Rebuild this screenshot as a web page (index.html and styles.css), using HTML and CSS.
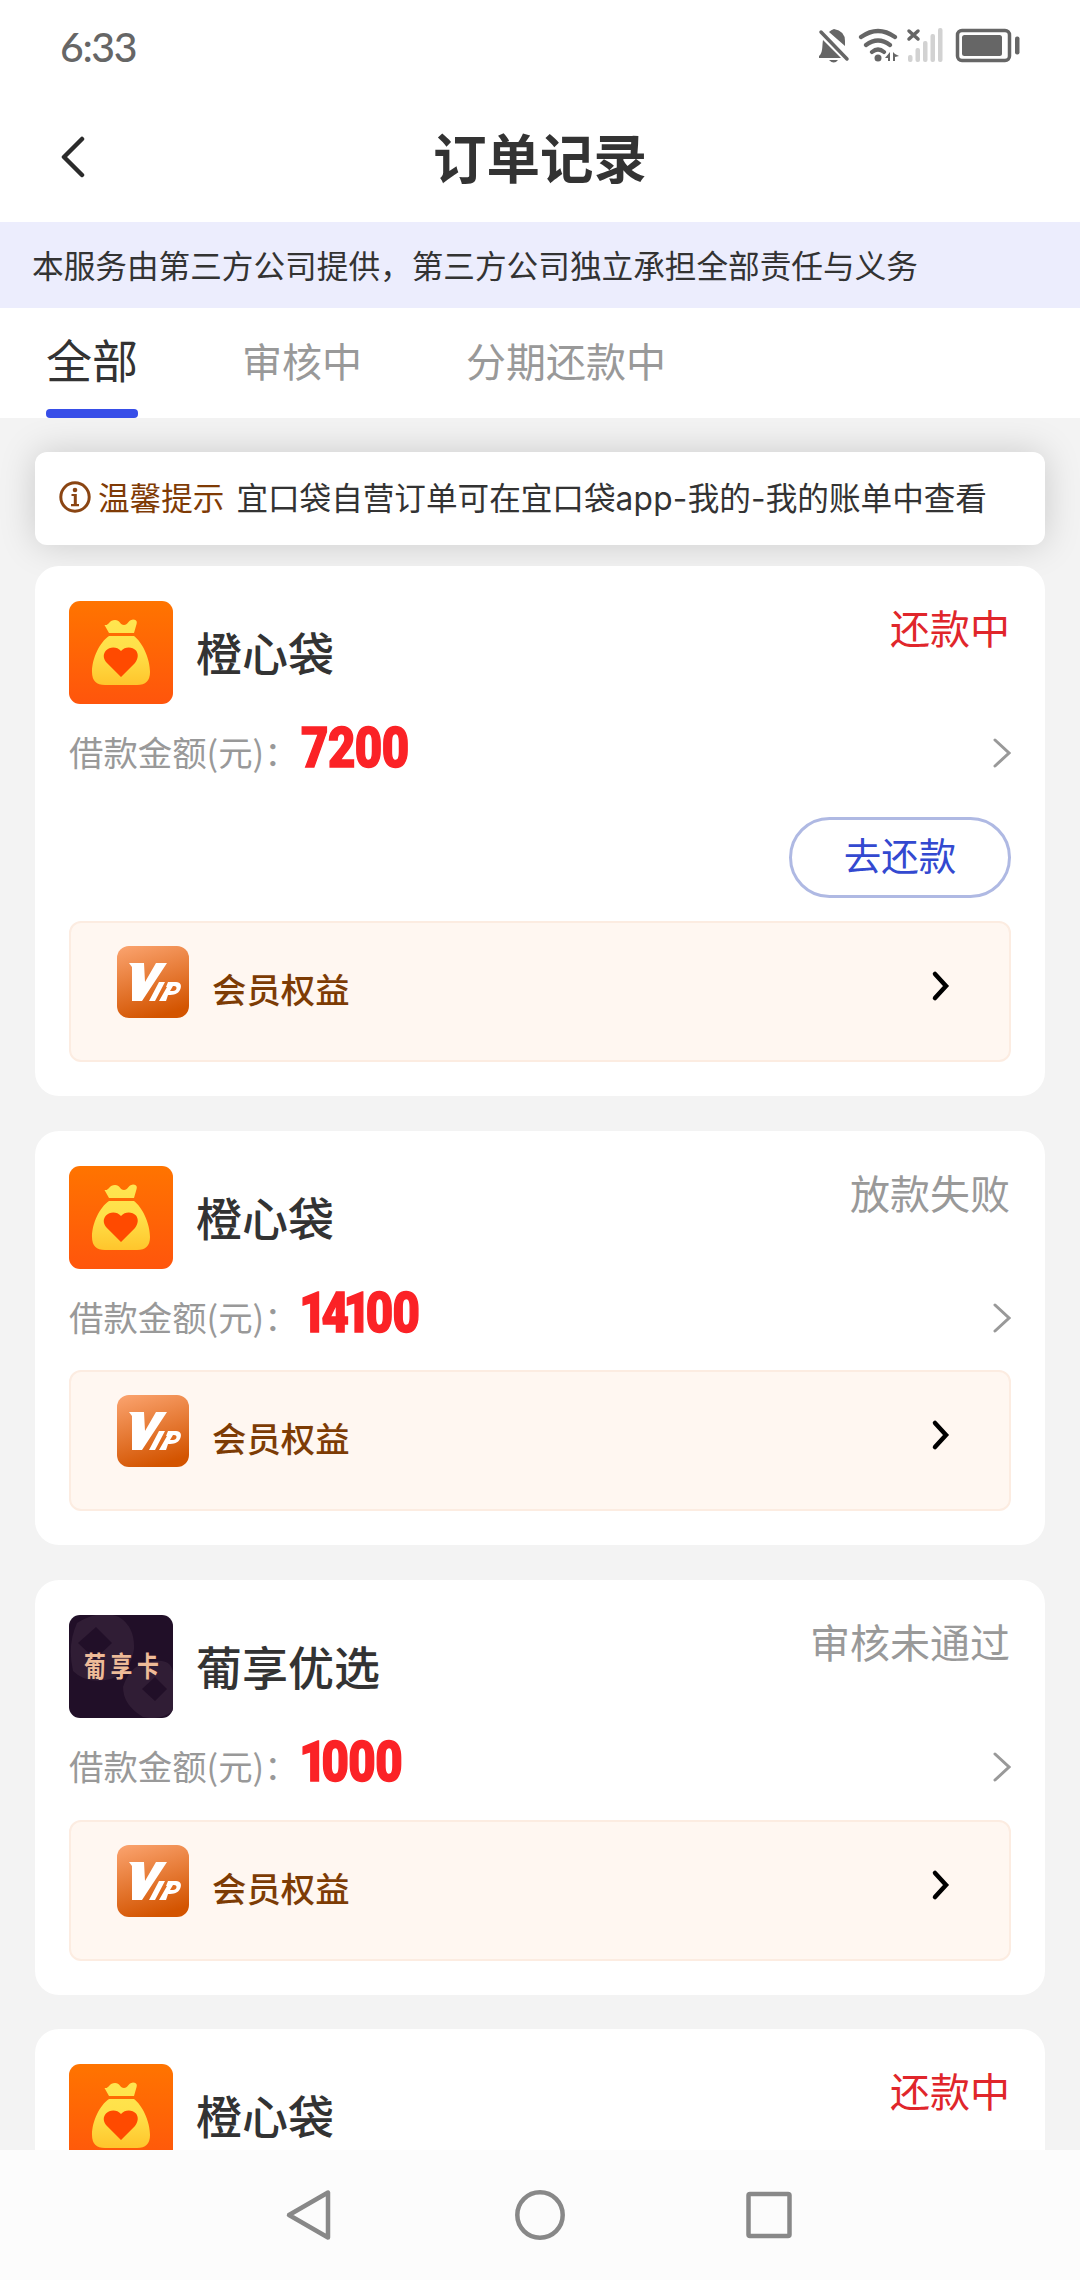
FILE: index.html
```html
<!DOCTYPE html>
<html lang="zh-CN">
<head>
<meta charset="utf-8">
<title>订单记录</title>
<link rel="stylesheet" href="styles.css">
</head>
<body>
<svg class="defs" aria-hidden="true">
  <defs>
    <linearGradient id="orange" x1="0" y1="0" x2="0" y2="1"><stop offset="0" stop-color="#ff7400"/><stop offset="1" stop-color="#ff550c"/></linearGradient>
    <linearGradient id="gold" x1="0" y1="0" x2="0" y2="1"><stop offset="0" stop-color="#ffe650"/><stop offset=".5" stop-color="#ffe048"/><stop offset="1" stop-color="#ffc52c"/></linearGradient>
    <linearGradient id="copper" x1=".2" y1="0" x2=".5" y2="1"><stop offset="0" stop-color="#f9a06a"/><stop offset="1" stop-color="#d35400"/></linearGradient>
    <symbol id="bag" viewBox="0 0 104 103">
      <rect width="104" height="103" rx="11" fill="url(#orange)"/>
      <path fill="url(#gold)" d="M40 32 35.500 24 C40 25 40 19 46 19 C51 19 51 24 55 24 C59 24 59 19 64 18.500 C69 19 68 22 67 25 L65 32Z M40 35 H65 C73 41 81 57 81 71 Q81 84 68 84 H36 Q23 84 23 71 C23 57 31 41 40 35Z"/>
      <path fill="#ff4a00" d="M52 76 37 61 C34 57 34 53 37 49.500 C41 45.500 48 45.500 52 50 C56 45.500 63 45.500 67 49.500 C69.500 53 69.500 57 66 62Z"/>
    </symbol>
    <symbol id="vip" viewBox="0 0 72 72">
      <rect width="72" height="72" rx="12" fill="url(#copper)"/>
      <path fill="#fff" d="M12 17H27L28 36 39 17H50L25 55H15V21Z M42 36H48L38 55H32Z"/>
      <path fill="#fff" fill-rule="evenodd" d="M51 36H59C64 36 65 40 63 44 C61 48 57 49 51 49L49 55H42L50 41H49Z M56 40 53 45H56C60 45 61 40 57 40Z"/>
    </symbol>
    <symbol id="next" viewBox="0 0 18 30"><path d="M2 2 16 15 2 28" fill="none" stroke="#999" stroke-width="3" stroke-linecap="round"/></symbol>
    <symbol id="go" viewBox="0 0 20 32"><path d="M4 4 15 16 4 28" fill="none" stroke="#000" stroke-width="4.500" stroke-linecap="round"/></symbol>
  </defs>
</svg>

<div class="screen">
  <header class="status-bar">
    <span class="clock">6:33</span>
    <svg class="status-icons" viewBox="0 0 204 40" fill="#666">
      <path d="M2 28C6 25 5 18 6 12 L24 30H2Z M12 4Q14 2 17 1Q28 3 28 13V18Z M12 32H21Q17 37 12 32Z"/>
      <path d="M4 4 30 31" fill="none" stroke="#666" stroke-width="3.500" stroke-linecap="round"/>
      <g fill="none" stroke="#666" stroke-width="4.200" stroke-linecap="round"><path d="M44 9Q61 -3 78 9M49 17Q61 8 73 17M55 24Q61 19 67 24"/></g>
      <circle cx="61" cy="30" r="3.500"/><path d="M73 24V33H71V30H68Z M76 24V33H78V29L82 28 78 26Z"/>
      <path d="M92 3 101 11M101 3 92 11" stroke="#666" stroke-width="3.500" stroke-linecap="round"/>
      <g fill="#d2d2d2"><rect x="91" y="27" width="4.500" height="7" rx="2"/><rect x="98.500" y="20" width="4.500" height="14" rx="2"/><rect x="106" y="13" width="4.500" height="21" rx="2"/><rect x="113.500" y="6" width="4.500" height="28" rx="2"/><rect x="121" y="0" width="4.500" height="34" rx="2"/></g>
      <rect x="140.500" y="2.500" width="52" height="30" rx="4.500" fill="none" stroke="#666" stroke-width="3.500"/><rect x="145" y="7" width="40" height="21" rx="2.500"/><rect x="198" y="8.500" width="4.500" height="18" rx="2"/>
    </svg>
  </header>

  <div class="title-bar">
    <svg class="back" viewBox="0 0 24 42"><path d="M21 3 3 21 21 39" fill="none" stroke="#2b2b2b" stroke-width="4.500" stroke-linecap="round" stroke-linejoin="round"/></svg>
    <h1 class="title">订单记录</h1>
  </div>

  <div class="banner">本服务由第三方公司提供，第三方公司独立承担全部责任与义务</div>

  <nav class="tabs">
    <a class="tab active">全部</a>
    <a class="tab">审核中</a>
    <a class="tab">分期还款中</a>
  </nav>

  <main class="content">
    <div class="notice">
      <svg class="info" viewBox="0 0 32 32" fill="#8a4513"><circle cx="16" cy="16" r="14.200" fill="none" stroke="#8a4513" stroke-width="3"/><circle cx="16" cy="9" r="2.300"/><path d="M12.500 13H17.800V23H20V25.200H12V23H14.800V15H12.500Z"/></svg>
      <span class="notice-label">温馨提示</span>
      <span class="notice-text">宜口袋自营订单可在宜口袋<span class="latin">app-</span>我的<span class="latin">-</span>我的账单中查看</span>
    </div>

    <section class="card">
      <div class="head"><svg class="logo"><use href="#bag"/></svg><h2 class="name">橙心袋</h2><span class="state due">还款中</span></div>
      <div class="amount-row"><span class="label">借款金额(元)：</span><span class="amount">7200</span><svg class="next"><use href="#next"/></svg></div>
      <div class="actions"><button class="repay">去还款</button></div>
      <div class="benefit"><svg class="vip"><use href="#vip"/></svg><span class="benefit-text">会员权益</span><svg class="go"><use href="#go"/></svg></div>
    </section>

    <section class="card">
      <div class="head"><svg class="logo"><use href="#bag"/></svg><h2 class="name">橙心袋</h2><span class="state">放款失败</span></div>
      <div class="amount-row"><span class="label">借款金额(元)：</span><span class="amount"><span class="tight">141</span>00</span><svg class="next"><use href="#next"/></svg></div>
      <div class="benefit"><svg class="vip"><use href="#vip"/></svg><span class="benefit-text">会员权益</span><svg class="go"><use href="#go"/></svg></div>
    </section>

    <section class="card">
      <div class="head">
        <div class="logo grape">
          <svg class="grape-art" viewBox="0 0 104 103"><g fill="#301d35"><path fill-rule="evenodd" d="M8 8Q30 -6 50 2Q66 12 65 34Q62 56 42 64Q18 70 4 56Q-2 30 8 8Z M27 12 9 28 26 44 43 28Z"/><path fill-rule="evenodd" d="M76 48Q104 40 104 60V96Q90 106 74 102Q54 90 54 72Q60 52 76 48Z M86 62 73 74 86 86 98 74Z"/></g></svg>
          <span class="grape-text">葡享卡</span>
        </div>
        <h2 class="name">葡享优选</h2><span class="state">审核未通过</span>
      </div>
      <div class="amount-row"><span class="label">借款金额(元)：</span><span class="amount"><span class="tight">1</span>000</span><svg class="next"><use href="#next"/></svg></div>
      <div class="benefit"><svg class="vip"><use href="#vip"/></svg><span class="benefit-text">会员权益</span><svg class="go"><use href="#go"/></svg></div>
    </section>

    <section class="card">
      <div class="head"><svg class="logo"><use href="#bag"/></svg><h2 class="name">橙心袋</h2><span class="state due">还款中</span></div>
    </section>
  </main>

  <footer class="nav-bar">
    <svg class="nav-icon" viewBox="0 0 52 52"><path d="M43 3.500V48.500L4 26Z"/></svg>
    <svg class="nav-icon" viewBox="0 0 52 52"><circle cx="26" cy="26" r="22.700"/></svg>
    <svg class="nav-icon" viewBox="0 0 52 52"><rect x="5.500" y="5" width="41" height="42" rx="1.500"/></svg>
  </footer>
</div>
</body>
</html>
```

FILE: styles.css
```css
* { box-sizing: border-box; }
body { margin: 0; background: #fff; color: #333; font-family: "Noto Sans CJK SC", sans-serif; }
h1, h2 { margin: 0; }
svg { display: block; flex: none; }
.defs { position: absolute; width: 0; height: 0; }
.screen { width: 1080px; height: 2280px; display: flex; flex-direction: column; overflow: hidden; white-space: nowrap; }

.status-bar { height: 92px; flex: none; display: flex; justify-content: space-between; align-items: center; padding: 0 60px; }
.clock { font: 500 41px/50px Lato, sans-serif; color: #666; letter-spacing: -1.4px; padding-top: 2px; }
.status-icons { width: 204px; height: 40px; margin: 3px -1px 0 0; }

.title-bar { height: 130px; flex: none; display: grid; grid-template-columns: 1fr auto 1fr; align-items: center; padding: 0 61px; }
.back { width: 24px; height: 42px; }
.title { font-size: 53.500px; line-height: 60px; font-weight: 700; padding-bottom: 3px; }

.banner { height: 86px; flex: none; padding-left: 32px; background: #ecedfd; font-size: 31.650px; line-height: 84px; }

.tabs { height: 110px; flex: none; display: flex; gap: 104px; padding-left: 46px; background: #fff; position: relative; z-index: 1; }
.tab { height: 110px; font-size: 40px; line-height: 105px; color: #999; }
.tab.active { font-size: 46px; line-height: 101px; color: #333; display: flex; flex-direction: column; justify-content: space-between; }
.tab.active::after { content: ""; height: 9px; flex: none; border-radius: 4px; background: #374ee8; }

.content { flex: 1; min-height: 0; overflow: hidden; background: #f3f3f3; padding: 34px 35px 0; }
.notice { height: 93px; margin-bottom: 21px; padding-left: 24px; display: flex; align-items: center; border-radius: 12px; background: #fff; box-shadow: 0 0 36px rgba(0, 0, 0, .17); font-size: 31.600px; }
.info { width: 32px; height: 32px; margin-bottom: 3px; }
.notice-label { margin-left: 7px; padding-bottom: 6px; color: #7f3b05; }
.notice-text { margin-left: 12px; padding-bottom: 6px; }
.latin { font-family: Inter, sans-serif; letter-spacing: .3px; }

.card { position: relative; padding: 35px 34px 34px; margin-bottom: 35px; border-radius: 24px; background: #fff; }
.card:nth-of-type(4) { margin-top: -.5px; }
.head { height: 103px; display: flex; }
.logo { width: 104px; height: 103px; }
.name { margin-left: 23px; font-size: 46px; font-weight: 500; line-height: 101px; }
.state { margin-left: auto; margin-right: 1px; font-size: 40px; line-height: 53px; color: #999; }
.state.due { color: #e0262b; }
.amount-row { height: 101.200px; display: flex; align-items: center; }
.label { font-size: 34.400px; color: #999; width: 232px; margin-top: -7px; }
.amount { font: 900 56px/60px Roboto, sans-serif; color: #fb2226; -webkit-text-stroke: 1.5px #fb2226; letter-spacing: -.6px; transform: scaleX(.845); transform-origin: 0 50%; margin-top: -14px; }
.tight { margin-left: -2px; letter-spacing: -6.300px; }
.next { width: 18px; height: 30px; margin: -4px 0 0 auto; }
.actions { height: 116px; display: flex; justify-content: flex-end; padding-top: 12px; }
.repay { width: 222px; height: 81px; padding: 0 0 7px; border: 3px solid #afb9e3; border-radius: 41px; background: #fff; color: #3349d0; font: 37.500px/68px "Noto Sans CJK SC", sans-serif; }
.benefit { height: 141px; display: flex; padding: 23px 58px 0 46px; border: 2px solid #fcece1; border-radius: 12px; background: #fff7f1; }
.vip { width: 72px; height: 72px; }
.benefit-text { margin-left: 23px; color: #7d3c05; font-size: 34.400px; font-weight: 500; line-height: 85px; }
.go { width: 20px; height: 32px; margin: 24px 0 0 auto; }

.grape { position: relative; overflow: hidden; border-radius: 11px; background: #210f28; }
.grape-art { width: 104px; height: 103px; }
.grape-text { position: absolute; left: 15px; top: 30px; font-size: 28px; line-height: 40px; font-weight: 700; letter-spacing: 6px; color: #eebb98; transform: scaleX(.78); transform-origin: 0 50%; }

.nav-bar { height: 130px; flex: none; display: flex; justify-content: center; gap: 177px; padding-top: 39px; background: #fcfcfc; }
.nav-icon { width: 52px; height: 52px; fill: none; stroke: #888; stroke-width: 4.500; stroke-linejoin: round; }
```
